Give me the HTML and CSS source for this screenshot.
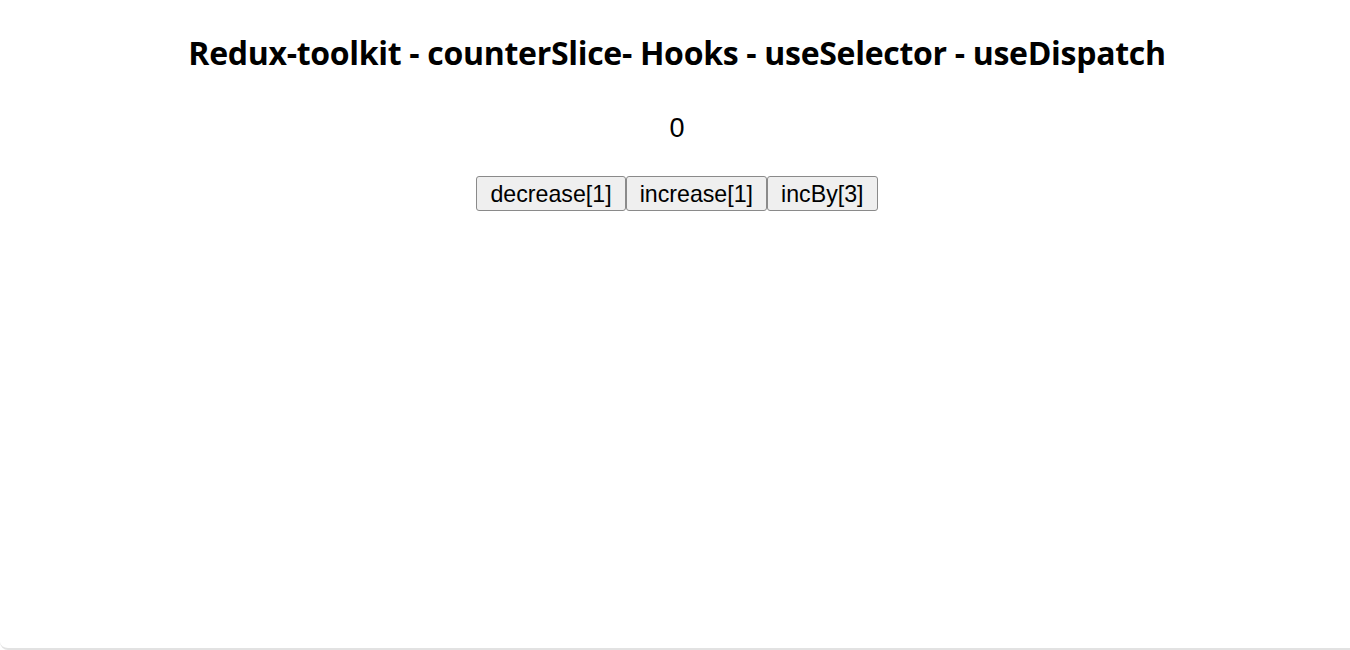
FILE: index.html
```html
<!DOCTYPE html>
<html lang="en">
<head>
<meta charset="utf-8">
<title>Redux-toolkit counter</title>
<link rel="stylesheet" href="styles.css">
</head>
<body>
<div class="page">
  <main class="app">
    <h1 class="title">Redux-toolkit - counterSlice- Hooks - useSelector - useDispatch</h1>
    <div class="count">0</div>
    <div class="actions"><button class="btn" type="button">decrease[1]</button><button class="btn" type="button">increase[1]</button><button class="btn" type="button">incBy[3]</button></div>
  </main>
</div>
</body>
</html>
```

FILE: styles.css
```css
html, body {
  margin: 0;
  padding: 0;
  background: #ffffff;
}

.page {
  box-sizing: border-box;
  height: 650px;
  border-bottom: 2px solid #e2e2e2;
  border-bottom-left-radius: 8px;
  overflow: hidden;
}

.app {
  padding: 33px 0 0 4px;
  text-align: center;
  color: #000000;
}

.title {
  margin: 0;
  font-family: "Open Sans", "Noto Sans", sans-serif;
  font-weight: 700;
  font-size: 32px;
  line-height: 40px;
  letter-spacing: -0.3px;
}

.count {
  margin-top: 39px;
  font-family: "Liberation Sans", Arial, sans-serif;
  font-size: 27px;
  line-height: 32px;
}

.actions {
  margin-top: 32px;
  display: flex;
  justify-content: center;
}

.btn {
  box-sizing: border-box;
  height: 35px;
  margin: 0;
  padding: 2px 13px 0;
  font-family: "Liberation Sans", Arial, sans-serif;
  font-size: 23.2px;
  line-height: 27px;
  color: #000000;
  background: #efefef;
  border: 1px solid #8a8a8a;
  border-radius: 3px;
}
```
